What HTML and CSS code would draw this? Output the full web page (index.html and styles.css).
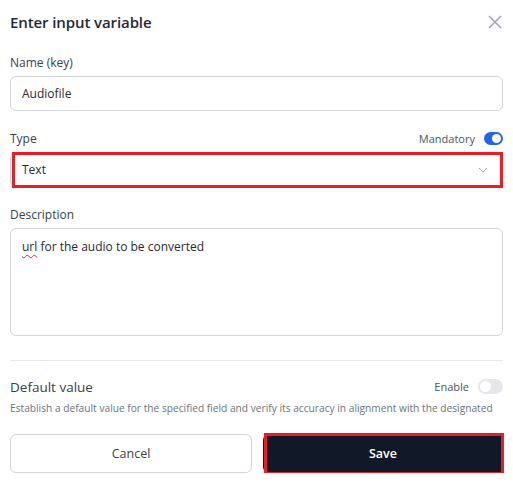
FILE: index.html
```html
<!DOCTYPE html>
<html>
<head>
<meta charset="utf-8">
<link rel="stylesheet" href="styles.css">
</head>
<body>
<div class="dialog">
  <div class="header">
    <h1 class="title">Enter input variable</h1>
    <svg class="close" width="14" height="14" viewBox="0 0 14 14"><path d="M1 1L13 13M13 1L1 13" stroke="#9ca3af" stroke-width="1.5" fill="none"/></svg>
  </div>

  <div class="field first">
    <div class="label">Name (key)</div>
    <div class="input">Audiofile</div>
  </div>

  <div class="field">
    <div class="label-row">
      <div class="label">Type</div>
      <div class="switch-wrap"><span class="switch-label">Mandatory</span><span class="toggle on"><span class="knob"></span></span></div>
    </div>
    <div class="select mark">
      <span>Text</span>
      <svg class="chev" width="10" height="6" viewBox="0 0 10 6"><path d="M1 1L5 5L9 1" stroke="#9ca3af" stroke-width="1" fill="none"/></svg>
    </div>
  </div>

  <div class="field">
    <div class="label">Description</div>
    <div class="textarea"><span class="spell">url</span> for the audio to be converted</div>
  </div>

  <div class="divider"></div>

  <div class="default">
    <div class="label-row">
      <div class="label strong">Default value</div>
      <div class="switch-wrap"><span class="switch-label">Enable</span><span class="toggle off"><span class="knob"></span></span></div>
    </div>
    <div class="help">Establish a default value for the specified field and verify its accuracy in alignment with the designated</div>
  </div>

  <div class="buttons">
    <div class="btn cancel">Cancel</div>
    <div class="btn save mark">Save</div>
  </div>
</div>
</body>
</html>
```
FILE: styles.css
```css
* { box-sizing: border-box; }
html, body { margin: 0; padding: 0; background: #fff; }
body { font-family: "Open Sans", "Noto Sans", sans-serif; color: #1f2937; }
.dialog { width: 513px; padding: 0 10px 0 10px; }
.header { display: flex; justify-content: space-between; align-items: center; height: 44px; }
.title { margin: 0; font-size: 15px; font-weight: 600; color: #1f2937; letter-spacing: -0.1px; }
.close { margin-right: 1px; }
.field { margin-top: 19px; }
.field.first { margin-top: 10px; }
.label { font-size: 12px; color: #374151; line-height: 18px; margin-bottom: 4px; }
.label-row .label { margin-bottom: 0; }
.label-row { display: flex; justify-content: space-between; align-items: center; margin-bottom: 4px; }
.label.strong { font-size: 13.5px; font-weight: 500; }
.input, .select { height: 35px; border: 1px solid #d1d5db; border-radius: 6px; display: flex; align-items: center; padding: 0 11px; font-size: 12px; color: #1f2937; }
.select { justify-content: space-between; position: relative; padding-right: 14px; }
.mark::after { content: ""; position: absolute; border: 3px solid #ec1c24; pointer-events: none; }
.select.mark::after { left: 1px; top: -1px; right: -1px; bottom: -2px; }
.textarea { height: 108px; border: 1px solid #d1d5db; border-radius: 6px; padding: 9px 11px; font-size: 12px; color: #1f2937; line-height: 18px; }
.spell { text-decoration: underline wavy #e11d48; text-decoration-thickness: 1px; text-underline-offset: 3px; }
.switch-wrap { display: flex; align-items: center; gap: 9px; margin-top: -2px; }
.switch-label { font-size: 11px; color: #4b5563; }
.toggle { width: 19px; height: 13px; border-radius: 7px; position: relative; display: inline-block; }
.toggle.on { background: #2563eb; }
.toggle .knob { position: absolute; top: 2px; width: 9px; height: 9px; border-radius: 50%; background: #fff; }
.toggle.on .knob { right: 2px; }
.toggle.off { width: 25px; height: 15px; background: #e5e7eb; border-radius: 8px; }
.toggle.off .knob { left: 2px; top: 2px; width: 11px; height: 11px; }
.divider { height: 1px; background: #e5e7eb; margin-top: 24px; }
.default { margin-top: 17px; }
.default .label-row { margin-bottom: 0; }
.help { font-size: 10.2px; color: #6b7280; margin-top: 5px; white-space: nowrap; overflow: hidden; }
.buttons { display: flex; gap: 11px; margin-top: 19px; }
.btn { flex: 1; height: 39px; border-radius: 6px; display: flex; align-items: center; justify-content: center; font-size: 12.5px; }
.cancel { border: 1px solid #d1d5db; color: #374151; }
.save { background: #111827; color: #fff; font-weight: 600; position: relative; }
.save.mark::after { left: 1px; top: -1px; right: -1px; bottom: -2px; }
```
